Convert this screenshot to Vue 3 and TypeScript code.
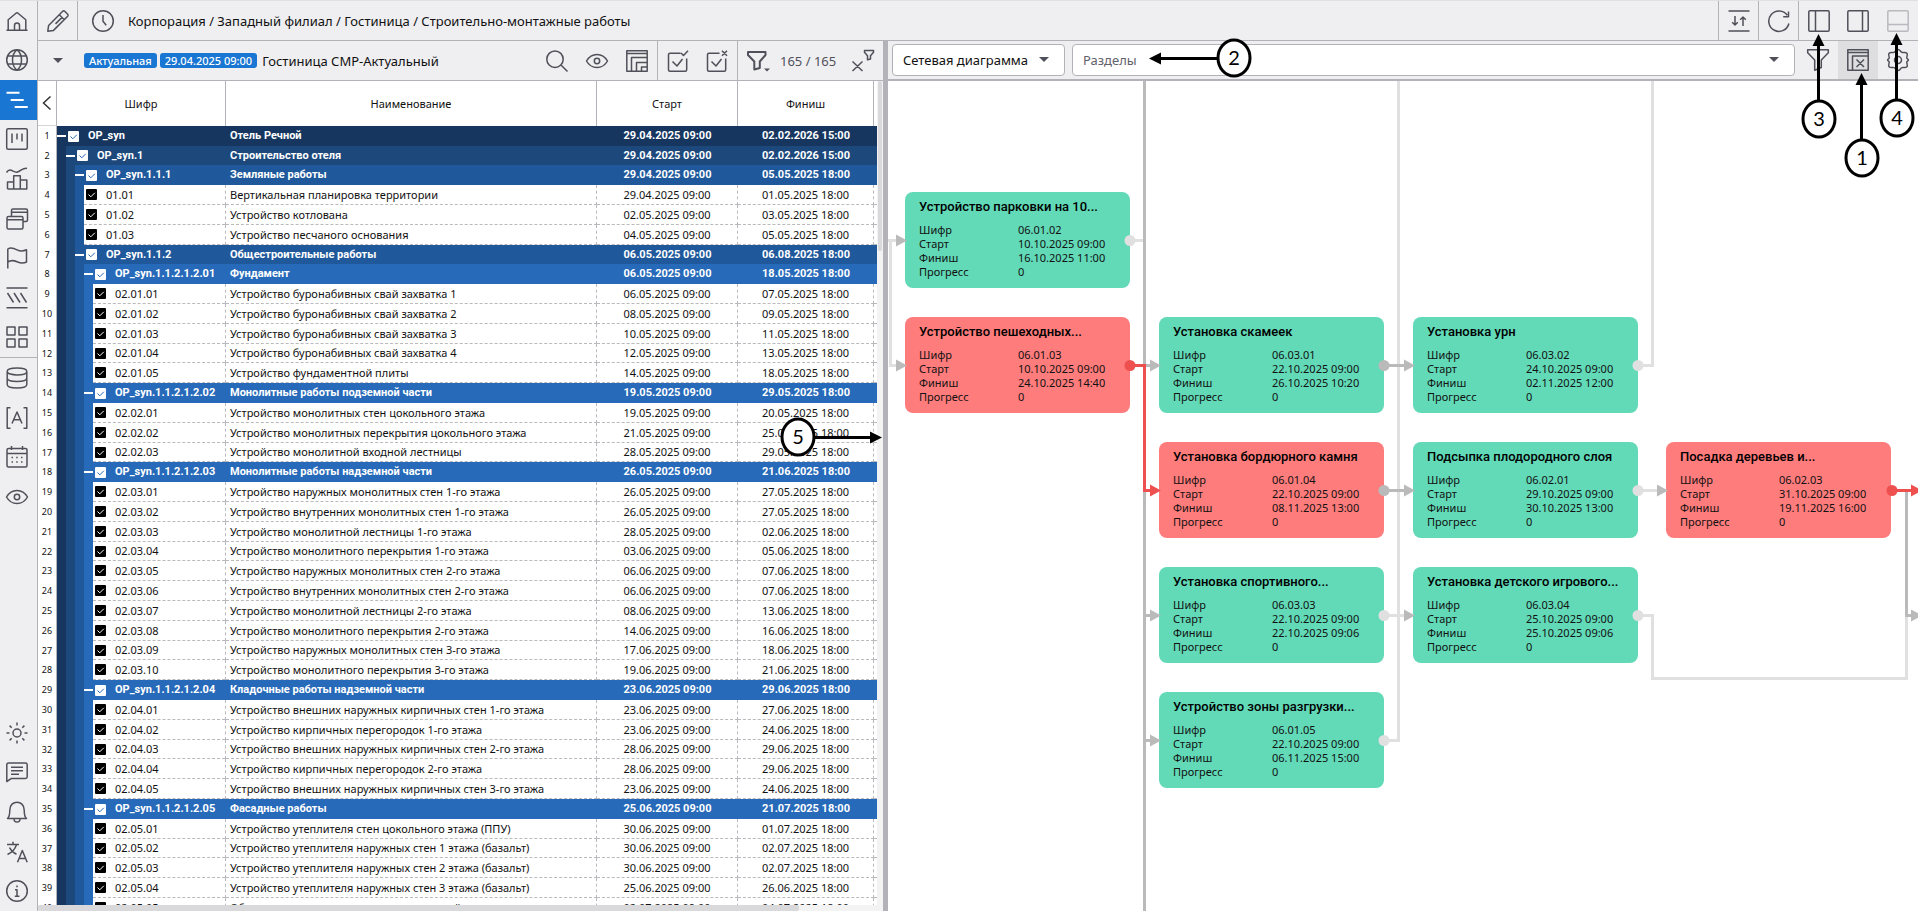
<script setup lang="ts">
import { ref } from 'vue'

interface Row {
  code: string
  name: string
  start: string
  finish: string
  level: number
  group: boolean
}

interface Card {
  x: number
  y: number
  critical: boolean
  title: string
  code: string
  start: string
  finish: string
}

const icons: Record<string, string> = {
  home: 'M1.5 21.3h21M3.2 21V10.8L11 4.2q1-.8 2 0l7.8 6.6V21M9.5 21v-4.5a2.5 2.5 0 0 1 5 0V21',
  globe: 'M12 1.7a10.3 10.3 0 1 0 0 20.6a10.3 10.3 0 1 0 0-20.6zM12 1.7c-6 5-6 15.6 0 20.6c6-5 6-15.6 0-20.6M2.6 8h18.8M2.6 16h18.8',
  gantt: 'M1.5 4.7h13M5.7 11.9h13M9.7 19h13',
  board: 'M3.2 1.7h17.6q1.5 0 1.5 1.5v17.6q0 1.5-1.5 1.5H3.2q-1.5 0-1.5-1.5V3.2q0-1.5 1.5-1.5zM7 6.5v9.5M12 6.5v6M17 6.5v8',
  chart: 'M2.5 22V15h6.2M8.7 22V8.7h6.6V22M15.3 13h6.5v9H2.5M1.5 5.5c4-6 7 1 11-.5s5-4 9.5-3.6',
  windows: 'M3.5 9.5h13q1.5 0 1.5 1.5v9.5q0 1.5-1.5 1.5h-13q-1.5 0-1.5-1.5V11q0-1.5 1.5-1.5zM2 12.7h16M6.5 9.5V3.5q0-1.5 1.5-1.5h13q1.5 0 1.5 1.5V13q0 1.5-1.5 1.5H18M6.5 5.2h16',
  flag: 'M2.8 22.5V3c3-2 6-.8 9.2.8s6 1.6 9.5 0V16c-3.5 1.8-6.5 1-9.5-.3s-6-1.8-9.2.3',
  hatch: 'M1.5 2h21M1.5 21.8h21M2.5 7l6 9.5M9 7l6 9.5M15.5 7l6 9.5',
  grid: 'M2 2h8v8H2zM14 2h8v8h-8zM2 14h8v8H2zM14 14h8v8h-8z',
  database: 'M2.2 5.5c0-4.6 19.6-4.6 19.6 0s-19.6 4.6-19.6 0V18.500c0 4.600 19.600 4.600 19.600 0V5.500M2.200 12c0 4.600 19.600 4.600 19.600 0',
  text: 'M5.500 1.700H2.200v20.600h3.300M18.500 1.700h3.300v20.600h-3.300M7 17.500L12 6l5 11.500M8.700 13.800h6.600',
  calendar: 'M3.500 3.500h17q1.500 0 1.500 1.500v15.500q0 1.500-1.500 1.500h-17q-1.500 0-1.500-1.500V5q0-1.500 1.500-1.500zM2 8.500h20M6.500 1v4M17.500 1v4M6.500 12.500h1.500M11.200 12.500h1.500M16 12.500h1.500M6.500 17h1.500M11.200 17h1.500M16 17h1.500',
  eye: 'M1.500 12c5-8.800 16-8.800 21 0c-5 8.800-16 8.800-21 0zM12 9.300a2.700 2.700 0 1 0 0 5.400a2.700 2.700 0 1 0 0-5.400z',
  sun: 'M12 8a4 4 0 1 0 0 8a4 4 0 1 0 0-8zM12 1.500v3M12 19.500v3M1.500 12h3M19.500 12h3M4.600 4.600l2.100 2.100M17.300 17.300l2.100 2.100M4.600 19.400l2.100-2.100M17.300 6.700l2.100-2.100',
  chat: 'M3.500 3h17q1.700 0 1.700 1.700v12q0 1.700-1.700 1.700H6.500L1.800 21.500V4.700q0-1.700 1.700-1.700zM6 7.200h12M6 10.700h12M6 14.200h8',
  bell: 'M2.500 18.500c2-1.500 2.300-3 2.300-8.500c0-10.500 14.400-10.500 14.400 0c0 5.500.3 7 2.300 8.500zM9 18.700c0 4.500 6 4.500 6 0',
  translate: 'M2 4.500h12M8 1.800v2.700M11.500 4.700c-1.500 4.500-5 8-9 9.800M4.500 7.500c1.500 3 4 5.500 7 6.800M12.500 22.300L17.300 10.500l4.900 11.800M14.200 18.500h6.300',
  info: 'M12 1.700a10.300 10.300 0 1 0 0 20.600a10.300 10.300 0 1 0 0-20.600zM12 6.500v1.800M10 10.800h2v6.500M9.800 17.300h4.600',
  pencil: 'M1.800 22.200l.8-5.700L16.700 2.300q1-.9 2 0l3 3q.9 1 0 2L7.500 21.400zM13.300 5.700l5 5M16 8.400l-6.500 6.500',
  clock: 'M12 1.700a10.300 10.300 0 1 0 0 20.600a10.300 10.300 0 1 0 0-20.600zM12 6v6.200l3.200 4',
  fit: 'M1.500 2h21M1.500 22h21M8 7v9M5.200 13.200L8 16l2.800-2.800M16 17V8M13.200 10.800L16 8l2.800 2.800',
  refresh: 'M21.900 14.500A10.200 10.200 0 1 1 20.300 6.300M21.500 2.500v5.200h-5.300',
  left: 'M3 1.800h18q1.200 0 1.200 1.200v18q0 1.200-1.200 1.200H3q-1.200 0-1.200-1.200V3q0-1.200 1.200-1.200zM8.500 1.800v20.400',
  right: 'M3 1.800h18q1.200 0 1.200 1.200v18q0 1.200-1.200 1.200H3q-1.200 0-1.200-1.200V3q0-1.200 1.200-1.200zM16.500 1.800v20.400',
  bottom: 'M3 1.800h18q1.200 0 1.200 1.200v18q0 1.200-1.200 1.200H3q-1.200 0-1.200-1.200V3q0-1.200 1.200-1.200zM1.800 15.500h20.400',
  search: 'M10 2a8.200 8.200 0 1 0 0 16.400a8.200 8.200 0 1 0 0-16.400zM16 16l6.500 6.500',
  layers: 'M1.800 1.800h20.400v20.400H1.800zM1.800 4.500h20.400M6.500 22V8.500h15.700M11.500 22v-8.500h10.700M16.500 22v-4h5.700',
  check: 'M14.500 4.200H4q-1.500 0-1.500 1.500v15q0 1.500 1.500 1.500h15.200q1.500 0 1.500-1.500V9.500M6.500 12.500l4.500 4.500L16.500 10M15 4l2.500 2.500L22 1.700',
  uncheck: 'M14.500 4.200H4q-1.500 0-1.500 1.500v15q0 1.500 1.500 1.500h15.200q1.500 0 1.500-1.500V9.500M6.500 12.500l4.500 4.500L16.500 10M17 1.700l5 5M22 1.700l-5 5',
  filter: 'M2 3h17.500v3l-5.700 6.500v6.500l-5.500 1.500v-8L2 6z',
  clear: 'M1.500 12.500l10 9.500M11.500 12.500l-10 9.500M13.500 1.500h9v1.800l-3 3.500v3.200l-3 .8v-4l-3-3.500z',
  funnel: 'M1.700 1.700h20.600v3l-7 7.300v7.500l-6.600 2.800V12l-7-7.300z',
  closeView: 'M1.800 1.800h20.400v20.400H1.800zM1.800 4.500h20.400M6.500 22V8h15.700M10.500 11.500l7.500 7.500M18 11.500l-7.500 7.500',
  gear: 'M12 1.500c2 0 2.400 2.300 3.900 2.900s3.700-.6 5 .9s-.4 3.200-.1 4.600s1.600 1.200 1.600 2.100s-1.300.7-1.600 2.100s1.400 3.100.1 4.600s-3.500.3-5 .9s-1.900 2.900-3.900 2.900s-2.400-2.300-3.900-2.900s-3.700.6-5-.9s.4-3.200.1-4.600s-1.600-1.200-1.600-2.100s1.300-.7 1.600-2.100s-1.400-3.100-.1-4.600s3.500-.3 5-.9s1.900-2.900 3.900-2.900zM12 8.500a3.500 3.500 0 1 0 0 7a3.500 3.500 0 1 0 0-7z',
}

type NavItem = [icon: string, label: string]
const navGroups: { key: string; items: NavItem[] }[] = [
  {
    key: 'main',
    items: [['home', 'Главная'], ['globe', 'Мир'], ['gantt', 'Календарный план'], ['board', 'Доска'], ['chart', 'Графики'], ['windows', 'Окна'], ['flag', 'Вехи'], ['hatch', 'Штриховки'], ['grid', 'Плитки']],
  },
  { key: 'data', items: [['database', 'Данные'], ['text', 'Атрибуты'], ['calendar', 'Календари'], ['eye', 'Просмотр']] },
  { key: 'system', items: [['sun', 'Тема'], ['chat', 'Сообщения'], ['bell', 'Уведомления'], ['translate', 'Язык'], ['info', 'Справка']] },
]

const g = (level: number, code: string, name: string, start: string, finish: string): Row => ({ level, code, name, start, finish, group: true })
const t = (level: number, code: string, name: string, start: string, finish: string): Row => ({ level, code, name, start: `${start}.2025 09:00`, finish: `${finish}.2025 18:00`, group: false })

const rows = ref<Row[]>([
  g(1, 'OP_syn', 'Отель Речной', '29.04.2025 09:00', '02.02.2026 15:00'),
  g(2, 'OP_syn.1', 'Строительство отеля', '29.04.2025 09:00', '02.02.2026 15:00'),
  g(3, 'OP_syn.1.1.1', 'Земляные работы', '29.04.2025 09:00', '05.05.2025 18:00'),
  t(3, '01.01', 'Вертикальная планировка территории', '29.04', '01.05'),
  t(3, '01.02', 'Устройство котлована', '02.05', '03.05'),
  t(3, '01.03', 'Устройство песчаного основания', '04.05', '05.05'),
  g(3, 'OP_syn.1.1.2', 'Общестроительные работы', '06.05.2025 09:00', '06.08.2025 18:00'),
  g(4, 'OP_syn.1.1.2.1.2.01', 'Фундамент', '06.05.2025 09:00', '18.05.2025 18:00'),
  t(4, '02.01.01', 'Устройство буронабивных свай захватка 1', '06.05', '07.05'),
  t(4, '02.01.02', 'Устройство буронабивных свай захватка 2', '08.05', '09.05'),
  t(4, '02.01.03', 'Устройство буронабивных свай захватка 3', '10.05', '11.05'),
  t(4, '02.01.04', 'Устройство буронабивных свай захватка 4', '12.05', '13.05'),
  t(4, '02.01.05', 'Устройство фундаментной плиты', '14.05', '18.05'),
  g(4, 'OP_syn.1.1.2.1.2.02', 'Монолитные работы подземной части', '19.05.2025 09:00', '29.05.2025 18:00'),
  t(4, '02.02.01', 'Устройство монолитных стен цокольного этажа', '19.05', '20.05'),
  t(4, '02.02.02', 'Устройство монолитных перекрытия цокольного этажа', '21.05', '25.05'),
  t(4, '02.02.03', 'Устройство монолитной входной лестницы', '28.05', '29.05'),
  g(4, 'OP_syn.1.1.2.1.2.03', 'Монолитные работы надземной части', '26.05.2025 09:00', '21.06.2025 18:00'),
  t(4, '02.03.01', 'Устройство наружных монолитных стен 1-го этажа', '26.05', '27.05'),
  t(4, '02.03.02', 'Устройство внутренних монолитных стен 1-го этажа', '26.05', '27.05'),
  t(4, '02.03.03', 'Устройство монолитной лестницы 1-го этажа', '28.05', '02.06'),
  t(4, '02.03.04', 'Устройство монолитного перекрытия 1-го этажа', '03.06', '05.06'),
  t(4, '02.03.05', 'Устройство наружных монолитных стен 2-го этажа', '06.06', '07.06'),
  t(4, '02.03.06', 'Устройство внутренних монолитных стен 2-го этажа', '06.06', '07.06'),
  t(4, '02.03.07', 'Устройство монолитной лестницы 2-го этажа', '08.06', '13.06'),
  t(4, '02.03.08', 'Устройство монолитного перекрытия 2-го этажа', '14.06', '16.06'),
  t(4, '02.03.09', 'Устройство наружных монолитных стен 3-го этажа', '17.06', '18.06'),
  t(4, '02.03.10', 'Устройство монолитного перекрытия 3-го этажа', '19.06', '21.06'),
  g(4, 'OP_syn.1.1.2.1.2.04', 'Кладочные работы надземной части', '23.06.2025 09:00', '29.06.2025 18:00'),
  t(4, '02.04.01', 'Устройство внешних наружных кирпичных стен 1-го этажа', '23.06', '27.06'),
  t(4, '02.04.02', 'Устройство кирпичных перегородок 1-го этажа', '23.06', '24.06'),
  t(4, '02.04.03', 'Устройство внешних наружных кирпичных стен 2-го этажа', '28.06', '29.06'),
  t(4, '02.04.04', 'Устройство кирпичных перегородок 2-го этажа', '28.06', '29.06'),
  t(4, '02.04.05', 'Устройство внешних наружных кирпичных стен 3-го этажа', '23.06', '24.06'),
  g(4, 'OP_syn.1.1.2.1.2.05', 'Фасадные работы', '25.06.2025 09:00', '21.07.2025 18:00'),
  t(4, '02.05.01', 'Устройство утеплителя стен цокольного этажа (ППУ)', '30.06', '01.07'),
  t(4, '02.05.02', 'Устройство утеплителя наружных стен 1 этажа (базальт)', '30.06', '02.07'),
  t(4, '02.05.03', 'Устройство утеплителя наружных стен 2 этажа (базальт)', '30.06', '02.07'),
  t(4, '02.05.04', 'Устройство утеплителя наружных стен 3 этажа (базальт)', '25.06', '26.06'),
  t(4, '02.05.05', 'Облицовка стен цокольного этажа плиткой', '02.07', '04.07'),
])

const stripCount = (row: Row): number => (row.group ? row.level - 1 : row.level)

const cards: Card[] = [
  { x: 17, y: 111, critical: false, title: 'Устройство парковки на 10...', code: '06.01.02', start: '10.10.2025 09:00', finish: '16.10.2025 11:00' },
  { x: 17, y: 236, critical: true, title: 'Устройство пешеходных...', code: '06.01.03', start: '10.10.2025 09:00', finish: '24.10.2025 14:40' },
  { x: 271, y: 236, critical: false, title: 'Установка скамеек', code: '06.03.01', start: '22.10.2025 09:00', finish: '26.10.2025 10:20' },
  { x: 271, y: 361, critical: true, title: 'Установка бордюрного камня', code: '06.01.04', start: '22.10.2025 09:00', finish: '08.11.2025 13:00' },
  { x: 271, y: 486, critical: false, title: 'Установка спортивного...', code: '06.03.03', start: '22.10.2025 09:00', finish: '22.10.2025 09:06' },
  { x: 271, y: 611, critical: false, title: 'Устройство зоны разгрузки...', code: '06.01.05', start: '22.10.2025 09:00', finish: '06.11.2025 15:00' },
  { x: 525, y: 236, critical: false, title: 'Установка урн', code: '06.03.02', start: '24.10.2025 09:00', finish: '02.11.2025 12:00' },
  { x: 525, y: 361, critical: false, title: 'Подсыпка плодородного слоя', code: '06.02.01', start: '29.10.2025 09:00', finish: '30.10.2025 13:00' },
  { x: 525, y: 486, critical: false, title: 'Установка детского игрового...', code: '06.03.04', start: '25.10.2025 09:00', finish: '25.10.2025 09:06' },
  { x: 778, y: 361, critical: true, title: 'Посадка деревьев и...', code: '06.02.03', start: '31.10.2025 09:00', finish: '19.11.2025 16:00' },
]

type Tone = 'light' | 'dark' | 'critical'
const links: [tone: Tone, d: string][] = [
  ['light', 'M0 159.500H10M2.500 159.500V284.500H10'],
  ['light', 'M242 159.500H256'],
  ['dark', 'M256.500 0V2000'],
  ['dark', 'M256.500 284.500H264M256.500 534.500H264M256.500 659.500H264'],
  ['critical', 'M242 284.500H256.500V409.500H264'],
  ['light', 'M496 659.500H510.500V0'],
  ['dark', 'M496 284.500H518M496 409.500H518'],
  ['light', 'M496 534.500H518'],
  ['light', 'M750 284.500H764.500V0'],
  ['light', 'M750 409.500H772'],
  ['light', 'M750 534.500H764.500V597.500H1018.500V534.500'],
  ['dark', 'M1018.500 409.500V534.500H1026'],
  ['critical', 'M1004 409.500H1026'],
]
const arrows: [tone: Tone, x: number, y: number][] = [
  ['dark', 19, 159.5], ['dark', 19, 284.5],
  ['dark', 273, 284.5], ['critical', 273, 409.5], ['dark', 273, 534.5], ['dark', 273, 659.5],
  ['dark', 527, 284.5], ['dark', 527, 409.5], ['dark', 527, 534.5],
  ['dark', 780, 409.5], ['critical', 1034, 409.5], ['dark', 1034, 534.5],
]
const dots: [tone: Tone, x: number, y: number][] = [
  ['light', 242, 159.5], ['critical', 242, 284.5],
  ['dark', 496, 284.5], ['dark', 496, 409.5], ['light', 496, 534.5], ['light', 496, 659.5],
  ['light', 750, 284.5], ['light', 750, 409.5], ['light', 750, 534.5],
  ['critical', 1004, 409.5],
]

const view = ref('network')
const section = ref('')
</script>

<template>
  <div class="app">
    <nav class="sidebar" aria-label="Разделы системы">
      <div v-for="group in navGroups" :key="group.key" :class="['nav-group', group.key]">
        <button v-for="[icon, label] in group.items" :key="icon" type="button" :class="['nav-btn', { active: icon === 'gantt' }]" :aria-label="label">
          <svg class="icon" viewBox="0 0 24 24" aria-hidden="true"><path :d="icons[icon]" /></svg>
        </button>
      </div>
    </nav>

    <div class="workspace">
      <header class="topbar">
        <button type="button" class="tool edit" aria-label="Редактировать"><svg class="icon" viewBox="0 0 24 24"><path :d="icons.pencil" /></svg></button>
        <button type="button" class="tool history" aria-label="История"><svg class="icon" viewBox="0 0 24 24"><path :d="icons.clock" /></svg></button>
        <div class="crumbs">Корпорация / Западный филиал / Гостиница / Строительно-монтажные работы</div>
        <button type="button" class="tool ruled" aria-label="Свернуть строки"><svg class="icon" viewBox="0 0 24 24"><path :d="icons.fit" /></svg></button>
        <button type="button" class="tool ruled" aria-label="Обновить"><svg class="icon" viewBox="0 0 24 24"><path :d="icons.refresh" /></svg></button>
        <button type="button" class="tool ruled" aria-label="Левая панель"><svg class="icon" viewBox="0 0 24 24"><path :d="icons.left" /></svg></button>
        <button type="button" class="tool" aria-label="Правая панель"><svg class="icon" viewBox="0 0 24 24"><path :d="icons.right" /></svg></button>
        <button type="button" class="tool" disabled aria-label="Нижняя панель"><svg class="icon" viewBox="0 0 24 24"><path :d="icons.bottom" /></svg></button>
      </header>

      <main class="panes">
        <section class="pane-table">
          <div class="toolbar">
            <button type="button" class="tool" aria-label="Выбрать версию"><span class="caret"></span></button>
            <span class="badges"><span class="badge">Актуальная</span><span class="badge">29.04.2025 09:00</span></span>
            <span class="project">Гостиница СМР-Актуальный</span>
            <button type="button" class="tool" aria-label="Поиск"><svg class="icon" viewBox="0 0 24 24"><path :d="icons.search" /></svg></button>
            <button type="button" class="tool" aria-label="Вид"><svg class="icon" viewBox="0 0 24 24"><path :d="icons.eye" /></svg></button>
            <button type="button" class="tool" aria-label="Уровни"><svg class="icon" viewBox="0 0 24 24"><path :d="icons.layers" /></svg></button>
            <button type="button" class="tool ruled" aria-label="Отметить всё"><svg class="icon" viewBox="0 0 24 24"><path :d="icons.check" /></svg></button>
            <button type="button" class="tool" aria-label="Снять отметки"><svg class="icon" viewBox="0 0 24 24"><path :d="icons.uncheck" /></svg></button>
            <button type="button" class="tool ruled" aria-label="Фильтр">
              <svg class="icon" viewBox="0 0 24 24"><path class="bold" :d="icons.filter" /><path class="solid" d="M18 19.500h6l-3 3z" /></svg>
            </button>
            <span class="counter">165 / 165</span>
            <button type="button" class="tool" aria-label="Сбросить фильтр"><svg class="icon" viewBox="0 0 24 24"><path :d="icons.clear" /></svg></button>
          </div>

          <div class="grid-area">
            <div class="grid-scroll">
              <table class="grid">
                <colgroup>
                  <col class="c-num" /><col class="c-code" /><col /><col class="c-start" /><col class="c-finish" /><col class="c-tail" />
                </colgroup>
                <thead>
                  <tr>
                    <th class="back"><button type="button" aria-label="Свернуть"><svg viewBox="0 0 10 16"><path d="M8.500 1.500L1.500 8l7 6.500" /></svg></button></th>
                    <th>Шифр</th>
                    <th>Наименование</th>
                    <th>Старт</th>
                    <th>Финиш</th>
                    <th class="tail"></th>
                  </tr>
                </thead>
                <tbody>
                  <tr v-for="(row, i) in rows" :key="row.code" :class="row.group ? ['group', 'l' + row.level] : 'leaf'">
                    <td class="num">{{ i + 1 }}</td>
                    <td class="code">
                      <div class="code-line">
                        <span v-for="n in stripCount(row)" :key="n" :class="['strip', 'l' + n]"></span>
                        <span v-if="row.group" class="dash"></span>
                        <label class="pick"><input type="checkbox" checked />{{ row.code }}</label>
                      </div>
                    </td>
                    <td class="name">{{ row.name }}</td>
                    <td class="date">{{ row.start }}</td>
                    <td class="date">{{ row.finish }}</td>
                    <td class="tail"></td>
                  </tr>
                </tbody>
              </table>
            </div>
            <div class="vbar"><div class="vthumb"></div></div>
          </div>
          <div class="hbar"><div class="hthumb"></div></div>

          <svg class="callout five" viewBox="0 0 104 40" aria-label="5">
            <path d="M37 20.500H92" /><path class="head" d="M104 20.500l-12 -6v12z" />
            <ellipse cx="20" cy="20" rx="16" ry="18" /><text x="20" y="27">5</text>
          </svg>
        </section>

        <div class="splitter" role="separator" aria-orientation="vertical"></div>

        <section class="pane-network">
          <div class="toolbar net-toolbar">
            <div class="select-wrap view-select">
              <select v-model="view" aria-label="Представление"><option value="network">Сетевая диаграмма</option></select>
              <span class="caret"></span>
            </div>
            <div class="select-wrap section-select">
              <input v-model="section" type="text" placeholder="Разделы" aria-label="Разделы" />
              <span class="caret"></span>
            </div>
            <button type="button" class="tool" aria-label="Фильтр диаграммы"><svg class="icon" viewBox="0 0 24 24"><path :d="icons.funnel" /></svg></button>
            <button type="button" class="tool pressed" aria-label="Закрыть вид"><svg class="icon" viewBox="0 0 24 24"><path :d="icons.closeView" /></svg></button>
            <button type="button" class="tool" aria-label="Настройки"><svg class="icon" viewBox="0 0 24 24"><path :d="icons.gear" /></svg></button>
          </div>

          <div class="canvas">
            <svg class="links" aria-hidden="true">
              <path v-for="([tone, d], i) in links" :key="i" :class="['link', tone]" :d="d" />
            </svg>
            <article v-for="card in cards" :key="card.code" :class="['card', { critical: card.critical }]" :style="{ left: card.x + 'px', top: card.y + 'px' }">
              <h3>{{ card.title }}</h3>
              <dl>
                <dt>Шифр</dt><dd>{{ card.code }}</dd>
                <dt>Старт</dt><dd>{{ card.start }}</dd>
                <dt>Финиш</dt><dd>{{ card.finish }}</dd>
                <dt>Прогресс</dt><dd>0</dd>
              </dl>
            </article>
            <svg class="links" aria-hidden="true">
              <path v-for="[tone, x, y] in arrows" :key="`a${x}-${y}`" :class="['end', tone]" :d="`M${x} ${y}l-11 -6v12z`" />
              <circle v-for="[tone, x, y] in dots" :key="`d${x}-${y}`" :class="['end', tone]" :cx="x" :cy="y" r="5.5" />
            </svg>
          </div>

          <svg class="callout two" viewBox="0 0 104 40" aria-label="2">
            <path d="M67 20.500H10" /><path class="head" d="M-1 20.500l12 -6v12z" />
            <ellipse cx="84" cy="20" rx="16" ry="18" /><text x="84" y="27">2</text>
          </svg>
        </section>
      </main>
    </div>

    <svg v-for="n in [3, 1, 4]" :key="n" :class="['callout', 'up', 'n' + n]" viewBox="0 0 40 106" :aria-label="String(n)">
      <path d="M19.500 68V12" /><path class="head" d="M19.500 1l-6 12h12z" />
      <ellipse cx="20" cy="86" rx="16" ry="18" /><text x="20" y="93">{{ n }}</text>
    </svg>
  </div>
</template>

<style>
body {
  overflow: hidden;
}
</style>

<style scoped>
.app {
  position: relative;
  display: flex;
  height: 100vh;
  box-sizing: border-box;
  border-top: 1px solid #e0e0e2;
  background: #efeff1;
  color: #111;
  font: 13px/20px "Noto Sans", "Open Sans", sans-serif;
  overflow: hidden;
}
.app * {
  box-sizing: border-box;
}
button {
  padding: 0;
  border: 0;
  background: none;
  color: inherit;
  font: inherit;
}
.icon {
  width: 24px;
  height: 24px;
  fill: none;
  stroke: #50505a;
  stroke-width: 1.5;
  stroke-linejoin: round;
}
.icon .bold {
  stroke-width: 2;
}
.icon .solid {
  fill: #50505a;
  stroke: none;
}
.caret {
  width: 0;
  border: 5px solid transparent;
  border-top-color: #50505a;
  border-bottom: 0;
}

/* Side navigation */
.sidebar {
  display: flex;
  flex: none;
  flex-direction: column;
  width: 38px;
  border-right: 1px solid #b2b2b8;
}
.nav-group {
  display: flex;
  flex-direction: column;
}
.nav-group.main {
  height: 357px;
  border-bottom: 1px solid #b2b2b8;
}
.nav-group.data {
  height: 159px;
}
.nav-group.system {
  height: 198px;
  margin-top: auto;
}
.nav-btn {
  display: flex;
  flex: 1;
  align-items: center;
  justify-content: center;
  padding-right: 3px;
}
.nav-btn.active {
  background: #1976d2;
}
.nav-btn.active .icon {
  stroke: #fff;
  stroke-width: 2;
}

/* Bars */
.workspace {
  display: flex;
  flex: 1;
  flex-direction: column;
  min-width: 0;
}
.topbar,
.toolbar {
  display: flex;
  flex: none;
  align-items: center;
  height: 40px;
  border-bottom: 1px solid #b2b2b8;
  white-space: nowrap;
}
.tool {
  display: flex;
  flex: none;
  align-items: center;
  justify-content: center;
  align-self: stretch;
  width: 40px;
}
.tool.ruled {
  border-left: 1px solid #b2b2b8;
}
.tool.edit {
  border-right: 1px solid #b2b2b8;
}
.tool.history {
  width: 50px;
}
.tool:disabled .icon {
  stroke: #b9b9c0;
}
.crumbs {
  flex: 1;
  overflow: hidden;
}
.panes {
  display: flex;
  flex: 1;
  min-height: 0;
}
.pane-table {
  position: relative;
  display: flex;
  flex: 845 1 0;
  flex-direction: column;
  min-width: 0;
}
.splitter {
  flex: none;
  width: 5px;
  background: #b2b2b8;
}
.pane-network {
  position: relative;
  display: flex;
  flex: 1030 1 0;
  flex-direction: column;
  min-width: 0;
}
.badges {
  display: flex;
  gap: 3px;
  margin-left: 6px;
}
.badge {
  padding: 0 5px;
  border-radius: 3px;
  background: #1976d2;
  color: #fff;
  font-size: 11px;
  font-weight: 500;
  line-height: 15px;
}
.project {
  flex: 1;
  margin-left: 5px;
  overflow: hidden;
}
.counter {
  width: 66px;
  padding-left: 3px;
  color: #50505a;
}

/* Task table */
.grid-area {
  display: flex;
  flex: 1;
  min-height: 0;
  background: #fff;
}
.grid-scroll {
  flex: 1;
  min-width: 0;
  overflow: hidden;
}
.grid {
  width: 100%;
  border-spacing: 0;
  table-layout: fixed;
  font-size: 11px;
  line-height: 16px;
}
.c-num {
  width: 19px;
}
.c-code {
  width: 169px;
}
.c-start {
  width: 141px;
}
.c-finish {
  width: 136px;
}
.c-tail {
  width: 3px;
}
th {
  height: 45px;
  padding: 0;
  border-right: 1px solid #b2b2b8;
  font-weight: 400;
}
th.tail,
td.tail {
  border-right: 0;
}
th.back {
  border-bottom: 1px solid #d5d5d8;
}
.back button {
  display: block;
  margin: 0 auto;
}
.back svg {
  display: block;
  width: 10px;
  height: 16px;
  fill: none;
  stroke: #333;
  stroke-width: 1.5;
}
td {
  height: 20px;
  padding: 0;
  white-space: nowrap;
  overflow: hidden;
}
tr:nth-child(5n + 2) td {
  height: 19px;
}
td.num {
  border-right: 1px solid #b2b2b8;
  font-size: 9px;
  text-align: center;
}
td.name {
  padding-left: 4px;
}
td.date {
  text-align: center;
}
.leaf .name,
.leaf .date,
.leaf .tail {
  border-bottom: 1px dashed #b9b9be;
}
.leaf .code,
.leaf .name,
.leaf .date {
  border-right: 1px dashed #b9b9be;
}
.leaf .pick {
  border-bottom: 1px dashed #b9b9be;
}
.code-line {
  display: flex;
  height: 20px;
}
tr:nth-child(5n + 2) .code-line {
  height: 19px;
}
.strip {
  flex: none;
  width: 9px;
}
.strip.l1,
.group.l1 td {
  background: #163660;
}
.strip.l2,
.group.l2 td {
  background: #1c487c;
}
.strip.l3,
.group.l3 td {
  background: #20599b;
}
.strip.l4,
.group.l4 td {
  background: #276ab9;
}
.group td.num {
  background: #fff;
}
.group td:not(.num) {
  color: #fff;
  font-family: Roboto, "Noto Sans", sans-serif;
  font-weight: 700;
}
.dash {
  align-self: center;
  flex: none;
  width: 9px;
  height: 2px;
  background: #fff;
}
.pick {
  display: flex;
  flex: 1;
  align-items: center;
  padding-left: 2px;
}
.pick input {
  appearance: none;
  flex: none;
  width: 11px;
  height: 11px;
  margin: 0 9px 0 0;
  border-radius: 1px;
  background: #000 url("data:image/svg+xml,%3Csvg xmlns='http://www.w3.org/2000/svg' viewBox='0 0 11 11'%3E%3Cpath d='M2.500 5.500l2.300 2.300L8.800 3.800' fill='none' stroke='white'/%3E%3C/svg%3E");
}
.group .pick input {
  background: #fff url("data:image/svg+xml,%3Csvg xmlns='http://www.w3.org/2000/svg' viewBox='0 0 11 11'%3E%3Cpath d='M2.500 5.500l2.300 2.300L8.800 3.800' fill='none' stroke='%23276ab9'/%3E%3C/svg%3E");
}
.vbar {
  flex: none;
  width: 6px;
  background: #f3f3f4;
}
.vthumb {
  width: 4px;
  height: 170px;
  margin: 0 auto;
  border-radius: 2px;
  background: #d9d9dc;
}
.hbar {
  flex: none;
  height: 6px;
  background: #f3f3f4;
}
.hthumb {
  width: 90%;
  height: 6px;
  border-radius: 2px;
  background: #d9d9dc;
}

/* Network diagram */
.net-toolbar {
  border-bottom-width: 2px;
  padding-left: 4px;
}
.select-wrap {
  position: relative;
  height: 32px;
}
.select-wrap select,
.select-wrap input {
  width: 100%;
  height: 100%;
  padding: 0 10px;
  border: 1px solid #b2b2b8;
  border-radius: 4px;
  background: #fff;
  appearance: none;
  color: #111;
  font: inherit;
}
.select-wrap input::placeholder {
  color: #62626b;
  opacity: 1;
}
.select-wrap .caret {
  position: absolute;
  top: 13px;
  right: 16px;
}
.view-select {
  flex: none;
  width: 173px;
}
.section-select {
  flex: 1;
  margin: 0 3px 0 7px;
}
.tool.pressed {
  background: #dedee0;
}
.canvas {
  position: relative;
  flex: 1;
  min-height: 0;
  background: #fff;
  overflow: hidden;
}
.links {
  position: absolute;
  inset: 0;
  width: 100%;
  height: 100%;
  pointer-events: none;
}
.link {
  fill: none;
  stroke-width: 3;
}
.link.light {
  stroke: #e0e0e0;
}
.link.dark {
  stroke: #bababa;
}
.link.critical {
  stroke: #ee5050;
}
.end.light {
  fill: #e0e0e0;
}
.end.dark {
  fill: #bababa;
}
.end.critical {
  fill: #ee5050;
}
.card {
  position: absolute;
  width: 225px;
  height: 96px;
  padding: 5px 14px;
  border-radius: 8px;
  background: #62d9b7;
}
.card.critical {
  background: #ff7c7c;
}
.card h3 {
  margin: 0 0 6px;
  color: #000;
  font: 500 13px/20px Roboto, "Noto Sans", sans-serif;
  white-space: nowrap;
}
.card dl {
  display: grid;
  grid-template-columns: 99px 1fr;
  margin: 0;
  font-size: 11px;
  line-height: 14px;
  white-space: nowrap;
}
.card dd {
  margin: 0;
}

/* Numbered callouts */
.callout {
  position: absolute;
  width: 104px;
  height: 40px;
  fill: none;
  stroke: #000;
  stroke-width: 3;
  overflow: visible;
  pointer-events: none;
}
.callout .head {
  fill: #000;
  stroke: none;
}
.callout ellipse {
  fill: #fff;
}
.callout text {
  fill: #000;
  stroke: none;
  font: 20px Lato, sans-serif;
  text-anchor: middle;
}
.callout.five {
  top: 376px;
  right: 1px;
}
.callout.two {
  top: -3px;
  left: 262px;
}
.callout.up {
  width: 40px;
  height: 106px;
}
.callout.n3 {
  top: 32px;
  right: 79px;
}
.callout.n1 {
  top: 71px;
  right: 36px;
}
.callout.n4 {
  top: 31px;
  right: 1px;
}
</style>
